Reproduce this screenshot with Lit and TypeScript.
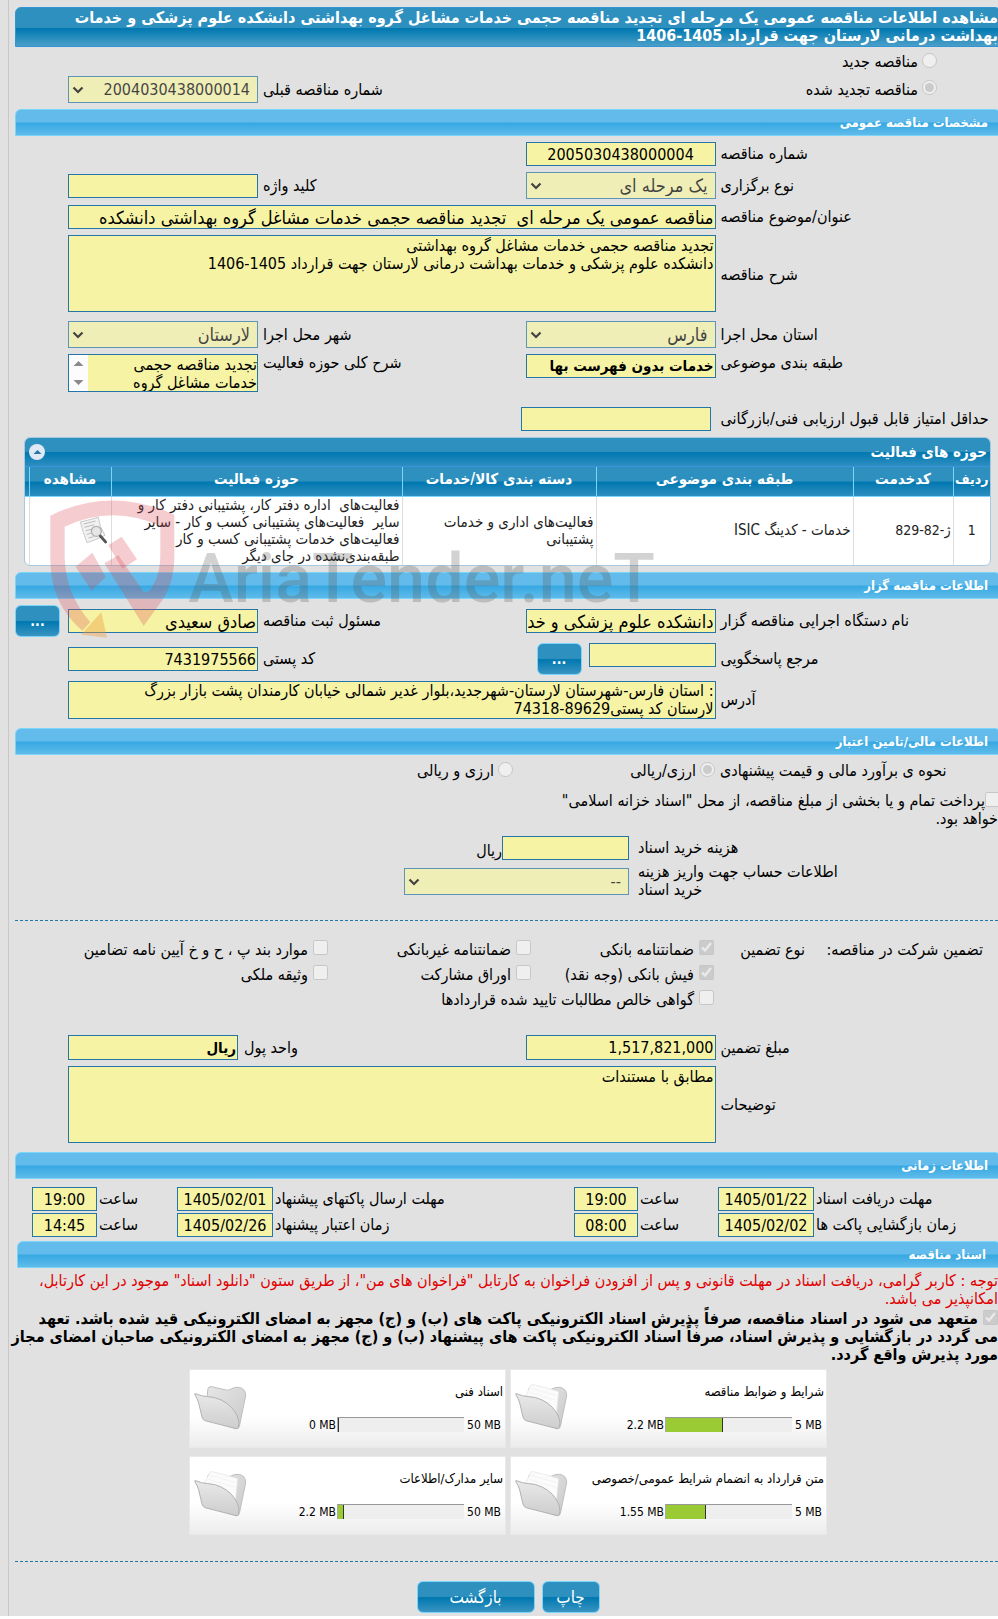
import { LitElement, html, css, svg, nothing } from "lit";
import { customElement } from "lit/decorators.js";

interface DocumentSlot {
  title: string;
  used: string;
  limit: string;
  percent: number;
  filled: boolean;
}

const documents: DocumentSlot[] = [
  { title: "شرایط و ضوابط مناقصه", used: "2.2 MB", limit: "5 MB", percent: 45, filled: true },
  { title: "اسناد فنی", used: "0 MB", limit: "50 MB", percent: 0, filled: false },
  { title: "متن قرارداد به انضمام شرایط عمومی/خصوصی", used: "1.55 MB", limit: "5 MB", percent: 32, filled: true },
  { title: "سایر مدارک/اطلاعات", used: "2.2 MB", limit: "50 MB", percent: 5, filled: true },
];

const folderIcon = (filled: boolean) => svg`
  <svg class="folder" viewBox="0 0 160 140" aria-hidden="true">
    <defs>
      <linearGradient id="back" x1="0" y1="0" x2="1" y2="1">
        <stop offset="0" stop-color="#e6e6e6" /><stop offset="1" stop-color="#cacaca" />
      </linearGradient>
      <linearGradient id="front" x1="0" y1="0" x2="0" y2="1">
        <stop offset="0" stop-color="#e9e9e9" /><stop offset="1" stop-color="#cdcdcd" />
      </linearGradient>
    </defs>
    <path d="M42 14 Q44 6 52 7 L96 17 Q104 20 112 14 Q122 8 134 9 Q156 12 156 34 L138 122 Q136 136 128 134 L60 112 L38 52 Z"
      fill="url(#back)" stroke="#bdbdbd" stroke-width="3" />
    ${filled
      ? svg`<path d="M30 40 L46 6 Q48 0 54 1 L84 8 L132 22 L124 100 L100 60 Z" fill="#fbfbfb" stroke="#e2e2e2" stroke-width="2" />
        <path d="M48 12 L126 34 M42 24 L122 48" stroke="#efefef" stroke-width="2" fill="none" />`
      : nothing}
    <path d="M3 32 Q0 26 7 29 Q22 36 40 37 L62 40 Q104 52 124 84 Q140 108 134 130 Q132 136 124 133 L34 110 Q26 108 24 98 L14 56 Q10 42 3 32 Z"
      fill="url(#front)" stroke="#b0b0b0" stroke-width="3" />
  </svg>`;

const pageIcon = svg`
  <svg width="30" height="30" viewBox="0 0 90 90" aria-hidden="true">
    <path d="M4 18 Q30 12 58 4 Q60 30 78 58 Q50 72 24 80 Q12 50 4 18 Z" fill="#f2f2f2" stroke="#c9c9c9" stroke-width="3" />
    <path d="M14 24 L50 15 M16 34 L46 26 M20 44 L38 40 M23 55 L36 52 M28 66 L44 62" stroke="#bcbcbc" stroke-width="3" />
    <circle cx="52" cy="46" r="15" fill="#e6e6e6" stroke="#b0b0b0" stroke-width="4" />
    <path d="M64 60 L80 78" stroke="#555" stroke-width="8" stroke-linecap="round" />
  </svg>`;

@customElement("app-root")
export class AppRoot extends LitElement {
  static styles = css`
    :host {
      display: block;
      overflow: hidden;
      background: #e1e1e1;
      direction: rtl;
      font-family: "DejaVu Sans Condensed", "DejaVu Sans", "Noto Sans", sans-serif;
      font-size: 16px;
      line-height: 18px;
      color: #000;
    }
    * { box-sizing: border-box; }
    .frame { border-left: 1px solid #c8c8c8; margin-left: 8px; padding: 7px 0 3px 6px; }
    .sheet { margin-right: -3px; }
    .title {
      margin: 0;
      padding: 1px 2px;
      font-size: 16px;
      font-weight: bold;
      line-height: 18px;
      color: #fff;
      white-space: nowrap;
      border: 1px solid #3394d3;
      border-radius: 6px 6px 0 0;
      background: linear-gradient(#2e90bf 52%, #0078b0 54%, #4a9fc8);
    }
    .bar {
      margin: 0;
      height: 27px;
      padding-right: 12px;
      font-size: 13px;
      font-weight: bold;
      line-height: 25px;
      color: #fff;
      border: 1px solid #7bd5fb;
      border-radius: 6px 6px 0 0;
      background: linear-gradient(#62bbea 48%, #36a8e2 52%, #5fbbea);
    }
    .bar.inset { margin-left: 2px; padding-right: 14px; }
    .fields {
      display: grid;
      grid-template-columns: minmax(0, 281fr) 190px minmax(0, 258fr) 190px 48px;
      gap: 6px 5px;
      align-items: center;
    }
    .renewal { grid-template-rows: 26px 27px; gap: 1px 5px; padding: 2px 0 6px; }
    .renewal .second { grid-row: 2; }
    .tender { padding: 6px 0; }
    .fields label, .deadlines label, .caption { text-align: left; white-space: nowrap; }
    .span3 { grid-column: 2 / span 3; }
    .col3 { grid-column: 3; }
    .col4 { grid-column: 4; }
    .option { display: flex; align-items: center; gap: 4px; white-space: nowrap; }
    .renewal .option { padding-right: 64px; }
    .fields .option label { text-align: right; }
    input[type="radio"], input[type="checkbox"] { width: 15px; height: 15px; margin: 0; flex: none; }
    .option input { position: relative; top: -2px; }
    .text, .area, .select {
      display: block;
      width: 100%;
      margin: 0;
      border: 1px solid #2476a8;
      border-radius: 0;
      background: #f6f4a4;
      color: #000;
      font-family: inherit;
      font-size: 16px;
      outline: none;
    }
    .text { height: 24px; padding: 0 1px; }
    .text.center { text-align: center; }
    .text.strong { font-size: 15px; font-weight: bold; }
    .text.phrase { font-size: 18px; }
    .area { height: 77px; padding: 1px; resize: none; font-size: 16px; line-height: 18px; overflow: hidden; }
    .area.tall { margin-bottom: 3px; }
    .area.short { height: 38px; padding: 0 1px; }
    .select {
      height: 27px;
      padding: 0 7px;
      appearance: none;
      opacity: 0.7;
      background: #f6f4a4 url("data:image/svg+xml,%3Csvg xmlns='http://www.w3.org/2000/svg' width='12' height='8'%3E%3Cpath d='M1.500 1.500L6 6l4.500-4.500' fill='none' stroke='%23000' stroke-width='2.200'/%3E%3C/svg%3E") no-repeat 3px 9px;
    }
    .select.phrase { font-size: 18px; }
    .top { align-self: start; }
    .scroller { display: flex; height: 38px; border: 1px solid #2476a8; background: #f6f4a4; }
    .scroller .area { height: 36px; border: 0; min-width: 0; flex: 1; padding: 1px 0; }
    .steppers { flex: none; width: 19px; background: #fcfcfc; }
    .score { padding: 9px 0 0; }
    .score .text { position: relative; left: -5px; }

    .watermarked { position: relative; }
    .watermark { position: absolute; left: 32px; top: 57px; width: 620px; height: 160px; pointer-events: none; direction: ltr; }
    .watermark text { font-family: Roboto, "Liberation Sans", sans-serif; font-weight: 500; }

    .panel { margin: 6px 10px 0 9px; border: 1px solid #a5c9e0; border-radius: 6px; background: #fff; overflow: hidden; }
    .panel-head {
      display: flex;
      align-items: center;
      justify-content: space-between;
      height: 29px;
      padding: 0 3px 0 4px;
      color: #fff;
      background: linear-gradient(#2e90bf 48%, #0078b0 52%, #2e8ec0);
      border-bottom: 1px solid #3a94e0;
    }
    .panel-head h3 { margin: 0; font-size: 15px; line-height: 28px; }
    .collapse { width: 16px; height: 16px; padding: 0; border: 0; border-radius: 8px; background: #dfe8f5; display: grid; place-items: center; }
    table { width: 100%; table-layout: fixed; border-collapse: collapse; font-size: 15px; line-height: 17px; color: #222; }
    th {
      height: 29px;
      padding: 0 0 4px;
      font-size: 15px;
      color: #fff;
      border-left: 1px solid #7bd5fb;
      border-bottom: 1px solid #7bd5fb;
      white-space: nowrap;
    }
    th.tight { font-size: 14px; }
    thead tr { background: linear-gradient(#2e90bf 48%, #0078b0 52%, #2e8ec0); }
    td { height: 69px; padding: 0 2px; border-left: 1px solid #ddd; text-align: right; }
    th:last-child, td:last-child { border-left: 0; }
    td.mid { text-align: center; }
    td.figures { font-size: 14px; }
    td.nowrap { white-space: nowrap; }
    td svg { display: block; }
    .w-row { width: 37px; }
    .w-code { width: 100px; }
    .w-subject { width: 257px; }
    .w-group { width: 194px; }
    .w-view { width: 82px; }
    .w-edge { width: 4px; }

    .gap-top { margin-top: 6px; }
    .gap-top-lg { margin-top: 9px; }
    .owner { padding: 6px 0 0; row-gap: 6px; }
    .split { display: flex; gap: 7px; align-items: start; }
    .split .text { width: 127px; flex: none; }
    .button {
      border: 1px solid #7bd5fb;
      border-radius: 6px;
      padding: 0;
      height: 32px;
      color: #fff;
      font-family: inherit;
      font-size: 17px;
      background: linear-gradient(#2e90bf 48%, #0078b0 52%, #3a94c2);
    }
    .more { width: 45px; font-size: 14px; font-weight: bold; flex: none; }
    .more-cell { width: 45px; justify-self: end; }

    .currency { grid-template-columns: minmax(0, 281fr) 197px minmax(0, 498fr); padding: 7px 0 0; }
    .treasury { width: 480px; max-width: 100%; padding: 12px 3px 0 0; margin-bottom: 8px; white-space: nowrap; }
    .treasury input { margin-right: -2px; }
    .treasury input, .pledge input { vertical-align: -1px; }
    .cost { display: grid; grid-template-columns: minmax(0, 363fr) 225px minmax(0, 380fr); column-gap: 9px; row-gap: 3px; align-items: center; }
    .cost label { text-align: left; white-space: nowrap; }
    .cost .unit { display: flex; align-items: end; }
    .cost .unit .text { width: 127px; }
    .divider { height: 0; margin: 0 3px 0 0; border: 0; border-top: 1px dashed #2476a8; }
    .divider.first { margin-top: 21px; }
    .divider.last { margin-top: 26px; }

    .guarantees {
      display: grid;
      grid-template-columns: 178px 91px 183px 203px minmax(0, 1fr);
      grid-auto-rows: 25px;
      align-items: center;
      padding: 16px 18px 0 0;
      white-space: nowrap;
    }
    .guarantees .option { gap: 5px; }
    .guarantees .option.first { grid-column: 3; }
    .guarantees .option.wide { grid-column: 3 / span 2; }
    .amount { padding: 23px 0 0; }
    .amount .text { height: 25px; }
    .amount .unit-of { width: 170px; justify-self: end; }
    .amount .caption.money { position: relative; left: -19px; }

    .deadlines {
      display: grid;
      grid-template-columns: minmax(0, 185fr) 96px 76px 64px minmax(0, 297fr) 96px 76px 65px 15px;
      gap: 2px;
      align-items: center;
      padding: 8px 0 4px;
    }

    .notice { margin: 4px 3px 0; color: #e00000; white-space: nowrap; }
    .pledge { margin: 2px 3px 0; font-weight: bold; white-space: nowrap; }
    .cards { display: grid; grid-template-columns: 317px 317px; justify-content: center; gap: 8px 4px; margin-top: 5px; }
    .card {
      display: flex;
      align-items: center;
      direction: ltr;
      height: 79px;
      padding: 0 2px 2px 4px;
      border: 1px solid #e9e9e9;
      background: linear-gradient(#fff 60%, #ececec);
    }
    .folder { width: 53px; height: 47px; flex: none; }
    .card-body { flex: 1; font-size: 12px; }
    .card-title { margin: 0; font-size: 13px; font-weight: normal; text-align: right; direction: rtl; white-space: nowrap; line-height: 18px; }
    .usage { display: flex; justify-content: end; align-items: center; margin-top: 16px; line-height: 16px; }
    .usage .limit { width: 39px; text-align: right; padding-right: 2px; }
    .usage.narrow .limit { width: 32px; }
    .track { width: 127px; height: 15px; margin-left: 1px; background: #eee; border-top: 1px solid #999; border-left: 1px solid #aaa; }
    .fill { height: 14px; border-right: 1px solid #333; background: #9acb34; }
    .actions { display: flex; justify-content: center; gap: 7px; margin-top: 19px; }
    .print { width: 58px; }
    .back { width: 118px; }
  `;

  private renderRenewal() {
    return html`
      <div class="fields renewal">
        <div class="option">
          <input type="radio" name="kind" id="kind-new" disabled /><label for="kind-new">مناقصه جدید</label>
        </div>
        <div class="option second">
          <input type="radio" name="kind" id="kind-renew" disabled checked /><label for="kind-renew">مناقصه تجدید شده</label>
        </div>
        <label class="col3 second" for="previous">شماره مناقصه قبلی</label>
        <select class="select second col4" id="previous" disabled><option>2004030438000014</option></select>
      </div>`;
  }

  private renderTender() {
    return html`
      <h2 class="bar">مشخصات مناقصه عمومی</h2>
      <div class="fields tender">
        <label for="number">شماره مناقصه</label>
        <input class="text center" id="number" readonly value="2005030438000004" />
        <span></span><span></span><span></span>
        <label for="type">نوع برگزاری</label>
        <select class="select phrase" id="type" disabled><option>یک مرحله ای</option></select>
        <label for="keyword">کلید واژه</label>
        <input class="text" id="keyword" readonly />
        <span></span>
        <label for="subject">عنوان/موضوع مناقصه</label>
        <input class="text phrase span3" id="subject" readonly
          value="مناقصه عمومی یک مرحله ای  تجدید مناقصه حجمی خدمات مشاغل گروه بهداشتی دانشکده" />
        <span></span>
        <label for="description">شرح مناقصه</label>
        <textarea class="area tall span3" id="description" readonly .value=${"تجدید مناقصه حجمی خدمات مشاغل گروه بهداشتی\nدانشکده علوم پزشکی و خدمات بهداشت درمانی لارستان جهت قرارداد 1405-1406"}></textarea>
        <span></span>
        <label for="province">استان محل اجرا</label>
        <select class="select phrase" id="province" disabled><option>فارس</option></select>
        <label for="city">شهر محل اجرا</label>
        <select class="select phrase" id="city" disabled><option>لارستان</option></select>
        <span></span>
        <label class="top" for="category">طبقه بندی موضوعی</label>
        <input class="text strong top" id="category" readonly value="خدمات بدون فهرست بها" />
        <label class="top" for="scope">شرح کلی حوزه فعالیت</label>
        <div class="scroller">
          <textarea class="area" id="scope" readonly .value=${"تجدید مناقصه حجمی\nخدمات مشاغل گروه"}></textarea>
          <svg class="steppers" viewBox="0 0 19 36" aria-hidden="true">
            <path d="M4.500 11h10l-5-5z M4.500 25h10l-5 5z" fill="#8a8a8a" />
          </svg>
        </div>
      </div>
      <div class="fields score">
        <label for="score">حداقل امتیاز قابل قبول ارزیابی فنی/بازرگانی</label>
        <input class="text" id="score" readonly />
      </div>`;
  }

  private renderActivities() {
    return html`
      <div class="panel">
        <div class="panel-head">
          <h3>حوزه های فعالیت</h3>
          <button class="collapse" aria-label="بستن">
            <svg width="9" height="6" viewBox="0 0 9 6"><path d="M0.500 5h8l-4-4z" fill="#2476a8" /></svg>
          </button>
        </div>
        <table>
          <colgroup>
            <col class="w-row" /><col class="w-code" /><col class="w-subject" /><col class="w-group" /><col /><col class="w-view" /><col class="w-edge" />
          </colgroup>
          <thead>
            <tr><th class="tight">ردیف</th><th>کدخدمت</th><th>طبقه بندی موضوعی</th><th>دسته بندی کالا/خدمات</th><th>حوزه فعالیت</th><th>مشاهده</th><th></th></tr>
          </thead>
          <tbody>
            <tr>
              <td class="mid figures">1</td>
              <td class="figures">ژ-82-829</td>
              <td>خدمات - کدینگ ISIC</td>
              <td class="nowrap">فعالیت‌های اداری و خدمات<br />پشتیبانی</td>
              <td class="nowrap">فعالیت‌های &nbsp;اداره دفتر کار، پشتیبانی دفتر کار و<br />سایر &nbsp;فعالیت‌های پشتیبانی کسب و کار - سایر<br />فعالیت‌های خدمات پشتیبانی کسب و کار<br />طبقه‌بندی‌نشده در جای دیگر</td>
              <td>${pageIcon}</td>
              <td></td>
            </tr>
          </tbody>
        </table>
      </div>`;
  }

  private renderOwner() {
    return html`
      <h2 class="bar gap-top">اطلاعات مناقصه گزار</h2>
      <div class="fields owner">
        <label for="agency">نام دستگاه اجرایی مناقصه گزار</label>
        <input class="text phrase" id="agency" readonly value="دانشکده علوم پزشکی و خدمات" />
        <label for="registrar">مسئول ثبت مناقصه</label>
        <input class="text phrase" id="registrar" readonly value="صادق سعیدی" />
        <div class="more-cell"><button class="button more" aria-label="جزئیات">...</button></div>
        <label for="contact">مرجع پاسخگویی</label>
        <div class="split">
          <input class="text" id="contact" readonly />
          <button class="button more" aria-label="انتخاب">...</button>
        </div>
        <label for="postal">کد پستی</label>
        <input class="text" id="postal" readonly value="7431975566" />
        <span></span>
        <label for="address">آدرس</label>
        <textarea class="area short span3" id="address" readonly .value=${": استان فارس-شهرستان لارستان-شهرجدید،بلوار غدیر شمالی خیابان کارمندان پشت بازار بزرگ\nلارستان کد پستی89629-74318"}></textarea>
      </div>`;
  }

  private renderWatermark() {
    return html`
      <svg class="watermark" viewBox="140 190 1860 480" aria-hidden="true">
        <g fill="#d9434f" fill-opacity="0.27">
          <path d="M150 255 Q330 165 522 252 L522 380 Q520 470 476 522 L446 482 Q480 440 480 370 L480 286 Q335 220 193 288 L193 380 Q196 490 270 575 L246 600 Q150 520 150 385 Z" />
          <path d="M226 408 L276 366 L316 438 L274 480 Z" />
          <path d="M324 344 L364 318 L410 386 L366 414 Z" />
          <path d="M312 398 L354 374 L430 484 L446 482 L476 522 L430 586 Z" />
        </g>
        <path d="M242 612 L320 621 L303 545 L276 574 Z" fill="#ee9c3c" fill-opacity="0.4" />
        <text x="564" y="515" font-size="205" fill="#5a5a5a" fill-opacity="0.27">AriaTender.neT</text>
      </svg>`;
  }

  private renderFinance() {
    return html`
      <h2 class="bar gap-top-lg">اطلاعات مالی/تامین اعتبار</h2>
      <div class="fields currency">
        <span class="caption">نحوه ی برآورد مالی و قیمت پیشنهادی</span>
        <div class="option">
          <input type="radio" name="currency" id="cur-one" disabled checked /><label for="cur-one">ارزی/ریالی</label>
        </div>
        <div class="option">
          <input type="radio" name="currency" id="cur-both" disabled /><label for="cur-both">ارزی و ریالی</label>
        </div>
      </div>
      <div class="treasury">
        <input type="checkbox" id="treasury" disabled /><label for="treasury">پرداخت تمام و یا بخشی از مبلغ مناقصه، از محل "اسناد خزانه اسلامی"<br />خواهد بود.</label>
      </div>
      <div class="cost">
        <label for="fee">هزینه خرید اسناد</label>
        <div class="unit"><input class="text" id="fee" readonly /><span>ریال</span></div>
        <span></span>
        <label for="account">اطلاعات حساب جهت واریز هزینه<br />خرید اسناد</label>
        <select class="select" id="account" disabled><option>--</option></select>
      </div>
      <hr class="divider first" />`;
  }

  private check(id: string, text: string, checked: boolean, place = "") {
    return html`<div class="option ${place}">
      <input type="checkbox" id=${id} disabled ?checked=${checked} /><label for=${id}>${text}</label>
    </div>`;
  }

  private renderGuarantee() {
    return html`
      <div class="guarantees">
        <span>تضمین شرکت در مناقصه:</span>
        <span>نوع تضمین</span>
        ${this.check("g1", "ضمانتنامه بانکی", true)}
        ${this.check("g2", "ضمانتنامه غیربانکی", false)}
        ${this.check("g3", "موارد بند پ ، ح و خ آیین نامه تضامین", false)}
        ${this.check("g4", "فیش بانکی (وجه نقد)", true, "first")}
        ${this.check("g5", "اوراق مشارکت", false)}
        ${this.check("g6", "وثیقه ملکی", false)}
        ${this.check("g7", "گواهی خالص مطالبات تایید شده قراردادها", false, "wide")}
      </div>
      <div class="fields amount">
        <label for="amount">مبلغ تضمین</label>
        <input class="text" id="amount" readonly value="1,517,821,000" />
        <label class="caption money" for="unit">واحد پول</label>
        <input class="text strong unit-of" id="unit" readonly value="ریال" />
        <span></span>
        <label for="notes">توضیحات</label>
        <textarea class="area span3" id="notes" readonly .value=${"مطابق با مستندات"}></textarea>
      </div>`;
  }

  private deadline(id: string, label: string, date: string, time: string) {
    return html`
      <label for="${id}-date">${label}</label>
      <input class="text center" id="${id}-date" readonly value=${date} />
      <label for="${id}-time">ساعت</label>
      <input class="text center" id="${id}-time" readonly value=${time} />`;
  }

  private renderSchedule() {
    return html`
      <h2 class="bar gap-top-lg">اطلاعات زمانی</h2>
      <div class="deadlines">
        ${this.deadline("receive", "مهلت دریافت اسناد", "1405/01/22", "19:00")}
        ${this.deadline("submit", "مهلت ارسال پاکتهای پیشنهاد", "1405/02/01", "19:00")}
        <span></span>
        ${this.deadline("open", "زمان بازگشایی پاکت ها", "1405/02/02", "08:00")}
        ${this.deadline("valid", "زمان اعتبار پیشنهاد", "1405/02/26", "14:45")}
      </div>`;
  }

  private renderDocument(doc: DocumentSlot) {
    return html`
      <article class="card">
        ${folderIcon(doc.filled)}
        <div class="card-body">
          <h3 class="card-title">${doc.title}</h3>
          <div class="usage ${doc.limit.length < 5 ? "narrow" : ""}">
            <span>${doc.used}</span>
            <div class="track"><div class="fill" style="width:${doc.percent}%"></div></div>
            <span class="limit">${doc.limit}</span>
          </div>
        </div>
      </article>`;
  }

  render() {
    return html`
      <main class="frame">
        <div class="sheet">
          <h1 class="title">مشاهده اطلاعات مناقصه عمومی یک مرحله ای تجدید مناقصه حجمی خدمات مشاغل گروه بهداشتی دانشکده علوم پزشکی و خدمات<br />بهداشت درمانی لارستان جهت قرارداد 1405-1406</h1>
          ${this.renderRenewal()} ${this.renderTender()}
          <div class="watermarked">
            ${this.renderActivities()} ${this.renderOwner()} ${this.renderWatermark()}
          </div>
          ${this.renderFinance()} ${this.renderGuarantee()} ${this.renderSchedule()}
          <h2 class="bar inset">اسناد مناقصه</h2>
          <p class="notice">توجه : کاربر گرامی، دریافت اسناد در مهلت قانونی و پس از افزودن فراخوان به کارتابل "فراخوان های من"، از طریق ستون "دانلود اسناد" موجود در این کارتابل،<br />امکانپذیر می باشد.</p>
          <div class="pledge">
            <input type="checkbox" id="pledge" disabled checked />
            <label for="pledge">متعهد می شود در اسناد مناقصه، صرفاً پذیرش اسناد الکترونیکی پاکت های (ب) و (ج) مجهز به امضای الکترونیکی قید شده باشد. تعهد<br />می گردد در بازگشایی و پذیرش اسناد، صرفاً اسناد الکترونیکی پاکت های پیشنهاد (ب) و (ج) مجهز به امضای الکترونیکی صاحبان امضای مجاز<br />مورد پذیرش واقع گردد.</label>
          </div>
          <section class="cards">${documents.map((d) => this.renderDocument(d))}</section>
          <hr class="divider last" />
          <div class="actions">
            <button class="button print">چاپ</button>
            <button class="button back">بازگشت</button>
          </div>
        </div>
      </main>`;
  }
}
